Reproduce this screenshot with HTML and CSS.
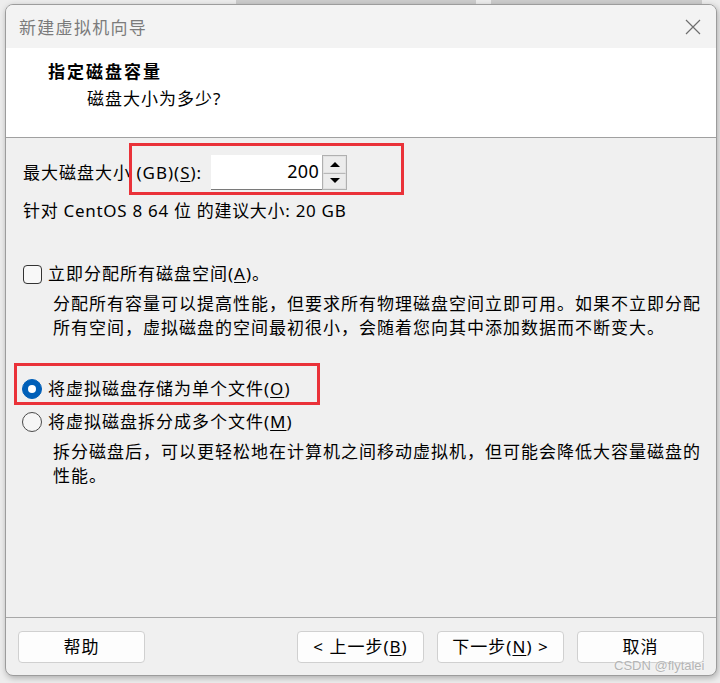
FILE: index.html
```html
<!DOCTYPE html>
<html lang="zh-CN">
<head>
<meta charset="utf-8">
<title>新建虚拟机向导</title>
<link rel="stylesheet" href="styles.css">
</head>
<body>
<div class="behind behind-a"></div>
<div class="behind behind-b"></div>
<div class="window">
  <div class="titlebar">
    <span class="title">新建虚拟机向导</span>
    <svg class="close" width="16" height="16" viewBox="0 0 16 16"><path d="M1 1 L15 15 M15 1 L1 15" stroke="#6e6e6e" stroke-width="1.2" fill="none"/></svg>
  </div>
  <div class="header">
    <h1 class="heading">指定磁盘容量</h1>
    <p class="subheading">磁盘大小为多少?</p>
  </div>
  <div class="content">
    <div class="field">
      <span class="field-label">最大磁盘大小 (GB)(<u>S</u>):</span>
      <div class="spin">
        <div class="spin-input">200</div>
        <div class="spin-btns">
          <div class="spin-btn"><span class="tri-up"></span></div>
          <div class="spin-btn"><span class="tri-down"></span></div>
        </div>
      </div>
    </div>
    <div class="hint">针对 CentOS 8 64 位 的建议大小: 20 GB</div>

    <div class="option option-check">
      <span class="checkbox"></span>
      <span>立即分配所有磁盘空间(<u>A</u>)。</span>
    </div>
    <p class="desc">分配所有容量可以提高性能，但要求所有物理磁盘空间立即可用。如果不立即分配所有空间，虚拟磁盘的空间最初很小，会随着您向其中添加数据而不断变大。</p>

    <div class="option option-radio1">
      <span class="radio radio-on"><span class="dot"></span></span>
      <span>将虚拟磁盘存储为单个文件(<u>O</u>)</span>
    </div>
    <div class="option option-radio2">
      <span class="radio"></span>
      <span>将虚拟磁盘拆分成多个文件(<u>M</u>)</span>
    </div>
    <p class="desc">拆分磁盘后，可以更轻松地在计算机之间移动虚拟机，但可能会降低大容量磁盘的性能。</p>
  </div>
  <div class="footer">
    <button class="btn btn-help">帮助</button>
    <button class="btn">&lt; 上一步(<u>B</u>)</button>
    <button class="btn">下一步(<u>N</u>) &gt;</button>
    <button class="btn">取消</button>
  </div>
  <div class="mark mark-size"></div>
  <div class="mark mark-file"></div>
</div>
<div class="watermark">CSDN @flytalei</div>
</body>
</html>
```
FILE: styles.css
```css
* { box-sizing: border-box; }
html, body { margin: 0; }
body {
  width: 720px;
  height: 683px;
  padding: 4px 0 0 5px;
  background: #ededed;
  font-family: "Noto Sans", "Noto Sans CJK SC", sans-serif;
  color: #000;
  overflow: hidden;
  position: relative;
}
.behind {
  position: absolute;
  top: 0;
  height: 6px;
  background: #cdcdcd;
}
.behind-a { left: 236px; width: 240px; }
.behind-b { left: 491px; width: 211px; }

.window {
  position: relative;
  width: 712px;
  height: 672px;
  border: 1px solid #9c9c9c;
  border-radius: 8px;
  overflow: hidden;
  display: flex;
  flex-direction: column;
  box-shadow: 1px 2px 6px rgba(0,0,0,0.28);
  background: #f0f0f0;
}
.titlebar {
  height: 43px;
  flex: none;
  background: #f3f3f3;
  display: flex;
  align-items: center;
  justify-content: space-between;
  padding: 0 15px 0 13px;
}
.title {
  font-size: 17px;
  letter-spacing: 1.3px;
  color: #7b7b7b;
}
.header {
  height: 90px;
  flex: none;
  background: #fff;
  border-bottom: 1px solid #a0a0a0;
  padding: 12px 0 0 42px;
}
.heading {
  margin: 0;
  font-size: 17px;
  line-height: 24px;
  font-weight: 700;
  letter-spacing: 2px;
}
.subheading {
  margin: 3px 0 0 39px;
  font-size: 17px;
  line-height: 24px;
  letter-spacing: 1px;
}
.content {
  flex: 1;
  padding: 17px 17px 0 17px;
  font-size: 17px;
  line-height: 24px;
  letter-spacing: 1px;
}
u { text-decoration: underline; text-underline-offset: 2px; }

.field {
  display: flex;
  align-items: center;
  height: 35px;
}
.field-label { width: 188px; flex: none; }
.spin {
  display: flex;
  width: 136px;
  height: 35px;
}
.spin-input {
  flex: 1;
  background: #fff;
  border-bottom: 1px solid #7a7a7a;
  text-align: right;
  padding-right: 3px;
  line-height: 33px;
  font-size: 18px;
  letter-spacing: 0.3px;
}
.spin-btns {
  width: 25px;
  flex: none;
  border: 1px solid #b0b0b0;
  display: flex;
  flex-direction: column;
  background: #f0f0f0;
}
.spin-btn {
  flex: 1;
  display: flex;
  align-items: center;
  justify-content: center;
  border: 1px solid #e2e2e2;
  background: #ececec;
}
.spin-btn + .spin-btn { border-top: 1px solid #b8b8b8; }
.tri-up, .tri-down {
  width: 0;
  height: 0;
  border-left: 5px solid transparent;
  border-right: 5px solid transparent;
}
.tri-up { border-bottom: 5px solid #000; }
.tri-down { border-top: 5px solid #000; }

.hint { margin-top: 9px; letter-spacing: 0.7px; }

.option {
  display: flex;
  align-items: center;
  gap: 6px;
  height: 24px;
}
.option-check { margin-top: 39px; }
.option-radio1 { margin-top: 37px; margin-left: -1px; }
.option-radio2 { margin-top: 9px; margin-left: -1px; }

.checkbox {
  width: 19px;
  height: 19px;
  border: 1px solid #333;
  border-radius: 4px;
  background: #f8f8f8;
  flex: none;
}
.radio {
  width: 20px;
  height: 20px;
  border-radius: 50%;
  border: 1px solid #4a4a4a;
  background: #f6f6f6;
  flex: none;
  display: flex;
  align-items: center;
  justify-content: center;
}
.radio-on {
  background: #005fb8;
  border-color: #005fb8;
}
.dot {
  width: 8px;
  height: 8px;
  border-radius: 50%;
  background: #fff;
}
.desc {
  margin: 6px 0 0 30px;
  width: 650px;
}

.footer {
  height: 58px;
  flex: none;
  border-top: 1px solid #a8a8a8;
  display: flex;
  gap: 13px;
  padding: 13px 12px 0 12px;
}
.btn {
  width: 127px;
  height: 32px;
  background: #fdfdfd;
  border: 1px solid #d0d0d0;
  border-radius: 4px;
  font: inherit;
  font-size: 17px;
  letter-spacing: 1px;
  color: #000;
  padding: 0;
  line-height: 30px;
}
.btn-help { margin-right: auto; }

.mark {
  position: absolute;
  border: 3px solid #ea3239;
}
.mark-size { left: 123px; top: 138px; width: 275px; height: 52px; }
.mark-file { left: 8px; top: 358px; width: 306px; height: 42px; }

.watermark {
  position: absolute;
  left: 614px;
  top: 658px;
  font-family: "Liberation Sans", sans-serif;
  font-size: 13px;
  color: #b4b4b4;
  text-shadow: 0 0 2px #fff;
}
```
